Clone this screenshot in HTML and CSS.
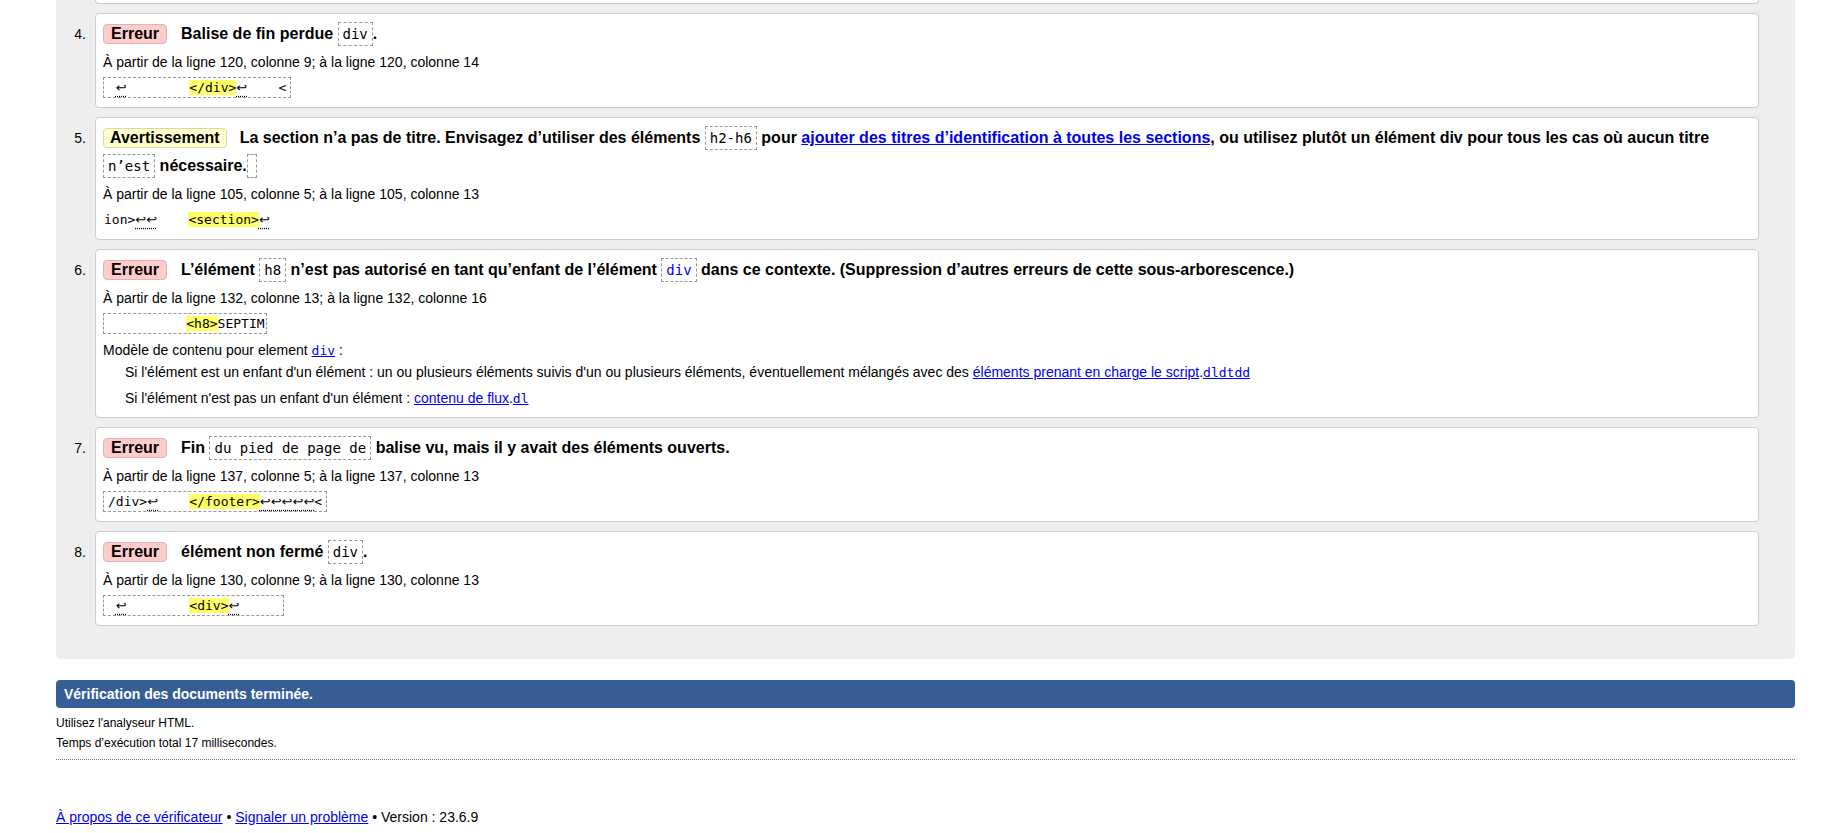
FILE: index.html
```html
<!DOCTYPE html>
<html lang="fr">
<head>
<meta charset="utf-8">
<title>Nu Html Checker</title>
<link rel="stylesheet" href="styles.css">
</head>
<body>
<div class="results">
  <div class="card tail"></div>

  <div class="row">
    <span class="num">4.</span>
    <div class="card">
      <p class="title"><strong class="badge error">Erreur</strong>Balise de fin perdue <code>div</code>.</p>
      <p class="loc">À partir de la ligne 120, colonne 9; à la ligne 120, colonne 14</p>
      <p class="extract"><code class="ex"> <span class="lf">↩</span>        <b>&lt;/div&gt;</b><span class="lf">↩</span>    &lt;</code></p>
    </div>
  </div>

  <div class="row">
    <span class="num">5.</span>
    <div class="card">
      <p class="title"><strong class="badge warning">Avertissement</strong>La section n’a pas de titre. Envisagez d’utiliser des éléments <code>h2-h6</code> pour <a href="#">ajouter des titres d’identification à toutes les sections</a>, ou utilisez plutôt un élément div pour tous les cas où aucun titre <code>n’est</code> nécessaire.<code class="empty"></code></p>
      <p class="loc">À partir de la ligne 105, colonne 5; à la ligne 105, colonne 13</p>
      <p class="extract"><code class="ex plain">ion&gt;<span class="lf">↩↩</span>    <b>&lt;section&gt;</b><span class="lf">↩</span></code></p>
    </div>
  </div>

  <div class="row">
    <span class="num">6.</span>
    <div class="card">
      <p class="title"><strong class="badge error">Erreur</strong>L’élément <code>h8</code> n’est pas autorisé en tant qu’enfant de l’élément <a href="#" class="codelink"><code>div</code></a> dans ce contexte. (Suppression d’autres erreurs de cette sous-arborescence.)</p>
      <p class="loc">À partir de la ligne 132, colonne 13; à la ligne 132, colonne 16</p>
      <p class="extract"><code class="ex tight">          <b>&lt;h8&gt;</b>SEPTIM</code></p>
      <dl class="model">
        <dt>Modèle de contenu pour element <a href="#"><code>div</code></a> :</dt>
        <dd>Si l'élément est un enfant d'un élément : un ou plusieurs éléments suivis d'un ou plusieurs éléments, éventuellement mélangés avec des <a href="#">éléments prenant en charge le script</a>.<a href="#"><code>dl</code></a><a href="#"><code>dt</code></a><a href="#"><code>dd</code></a></dd>
        <dd>Si l'élément n'est pas un enfant d'un élément : <a href="#">contenu de flux</a>.<a href="#"><code>dl</code></a></dd>
      </dl>
    </div>
  </div>

  <div class="row">
    <span class="num">7.</span>
    <div class="card">
      <p class="title"><strong class="badge error">Erreur</strong>Fin <code>du pied de page de</code> balise vu, mais il y avait des éléments ouverts.</p>
      <p class="loc">À partir de la ligne 137, colonne 5; à la ligne 137, colonne 13</p>
      <p class="extract"><code class="ex">/div&gt;<span class="lf">↩</span>    <b>&lt;/footer&gt;</b><span class="lf">↩↩↩↩↩</span>&lt;</code></p>
    </div>
  </div>

  <div class="row">
    <span class="num">8.</span>
    <div class="card">
      <p class="title"><strong class="badge error">Erreur</strong>élément non fermé <code>div</code>.</p>
      <p class="loc">À partir de la ligne 130, colonne 9; à la ligne 130, colonne 13</p>
      <p class="extract"><code class="ex"> <span class="lf">↩</span>        <b>&lt;div&gt;</b><span class="lf">↩</span>     </code></p>
    </div>
  </div>
</div>

<h2 class="done">Vérification des documents terminée.</h2>
<p class="stats">Utilisez l'analyseur HTML.</p>
<p class="stats">Temps d’exécution total 17 millisecondes.</p>
<div class="sep"></div>

<p class="footer"><a href="#">À propos de ce vérificateur</a> • <a href="#">Signaler un problème</a> • Version : 23.6.9</p>
</body>
</html>
```

FILE: styles.css
```css
* { box-sizing: border-box; }
html { margin: 0; padding: 0; }
body {
  margin: 0 27px 0 56px;
  font-family: "Liberation Sans", Arial, sans-serif;
  font-size: 14px;
  color: #000;
  background: #fff;
}
p { margin: 0; }
a { color: #00e; text-decoration: underline; }

.results {
  background: #eee;
  border-radius: 0 0 5px 5px;
  padding: 0 36px 33px 0;
  display: flex;
  flex-direction: column;
  gap: 9px;
}
.row { display: flex; align-items: flex-start; }
.num {
  flex: none;
  width: 30px;
  margin-right: 9px;
  text-align: right;
  padding-top: 7px;
  line-height: 28px;
  font-size: 14px;
}
.card {
  flex: 1;
  min-width: 0;
  background: #fff;
  border: 1px solid #ccc;
  border-radius: 4px;
  padding: 6px 8px 9px 7px;
}
.card.tail {
  flex: none;
  height: 4px;
  margin-left: 39px;
  padding: 0;
  border-top: none;
  border-radius: 0 0 4px 4px;
}

.title { font-weight: bold; font-size: 16px; line-height: 28px; }
.badge {
  display: inline-block;
  line-height: 18px;
  padding: 0 7px;
  border-radius: 4px;
  margin-right: 14px;
}
.badge.error { background: #fcc; border: 1px solid #e0b4b4; }
.badge.warning { background: #ffc; border: 1px solid #d9d9b0; padding: 0 6px; margin-right: 13px; }

code { font-family: "DejaVu Sans Mono", monospace; font-size: 13px; }
.title code {
  display: inline-block;
  font-size: 14px;
  font-weight: normal;
  line-height: 20px;
  padding: 1px 4px;
  border: 1px dashed #999;
}
.title code.empty {
  width: 10px;
  height: 24px;
  padding: 0;
  vertical-align: -7px;
}

.loc { margin-top: 4px; line-height: 20px; }
.extract { margin-top: 5px; line-height: 21px; }
.ex {
  display: inline-block;
  white-space: pre;
  font-size: 13px;
  line-height: 19px;
  padding: 0 4px;
  border: 1px dashed #999;
  vertical-align: top;
}
.ex.plain { border-color: transparent; padding: 0; }
.ex.tight { padding-right: 1px; }
.ex b { font-weight: normal; background: #ff6; }
.lf {
  font-family: "DejaVu Sans", sans-serif;
  text-decoration: underline dotted;
  text-underline-offset: 4px;
}

.model { margin: 6px 0 0; line-height: 20px; }
.model code { line-height: 1; }
.model dt { margin: 0; }
.model dd { margin: 2px 0 0 22px; }
.model dd + dd { margin-top: 6px; }

.done {
  margin: 21px 0 0;
  background: #365d95;
  color: #fff;
  font-weight: bold;
  font-size: 14px;
  line-height: 28px;
  padding: 0 8px;
  border-radius: 4px;
}
.stats { font-size: 12px; line-height: 19px; }
.done + .stats { margin-top: 6px; }
.stats + .stats { margin-top: 1px; }
.sep { margin-top: 6px; border-top: 1px dotted #777; }
.footer { margin-top: 47px; line-height: 20px; font-size: 14px; }
```
